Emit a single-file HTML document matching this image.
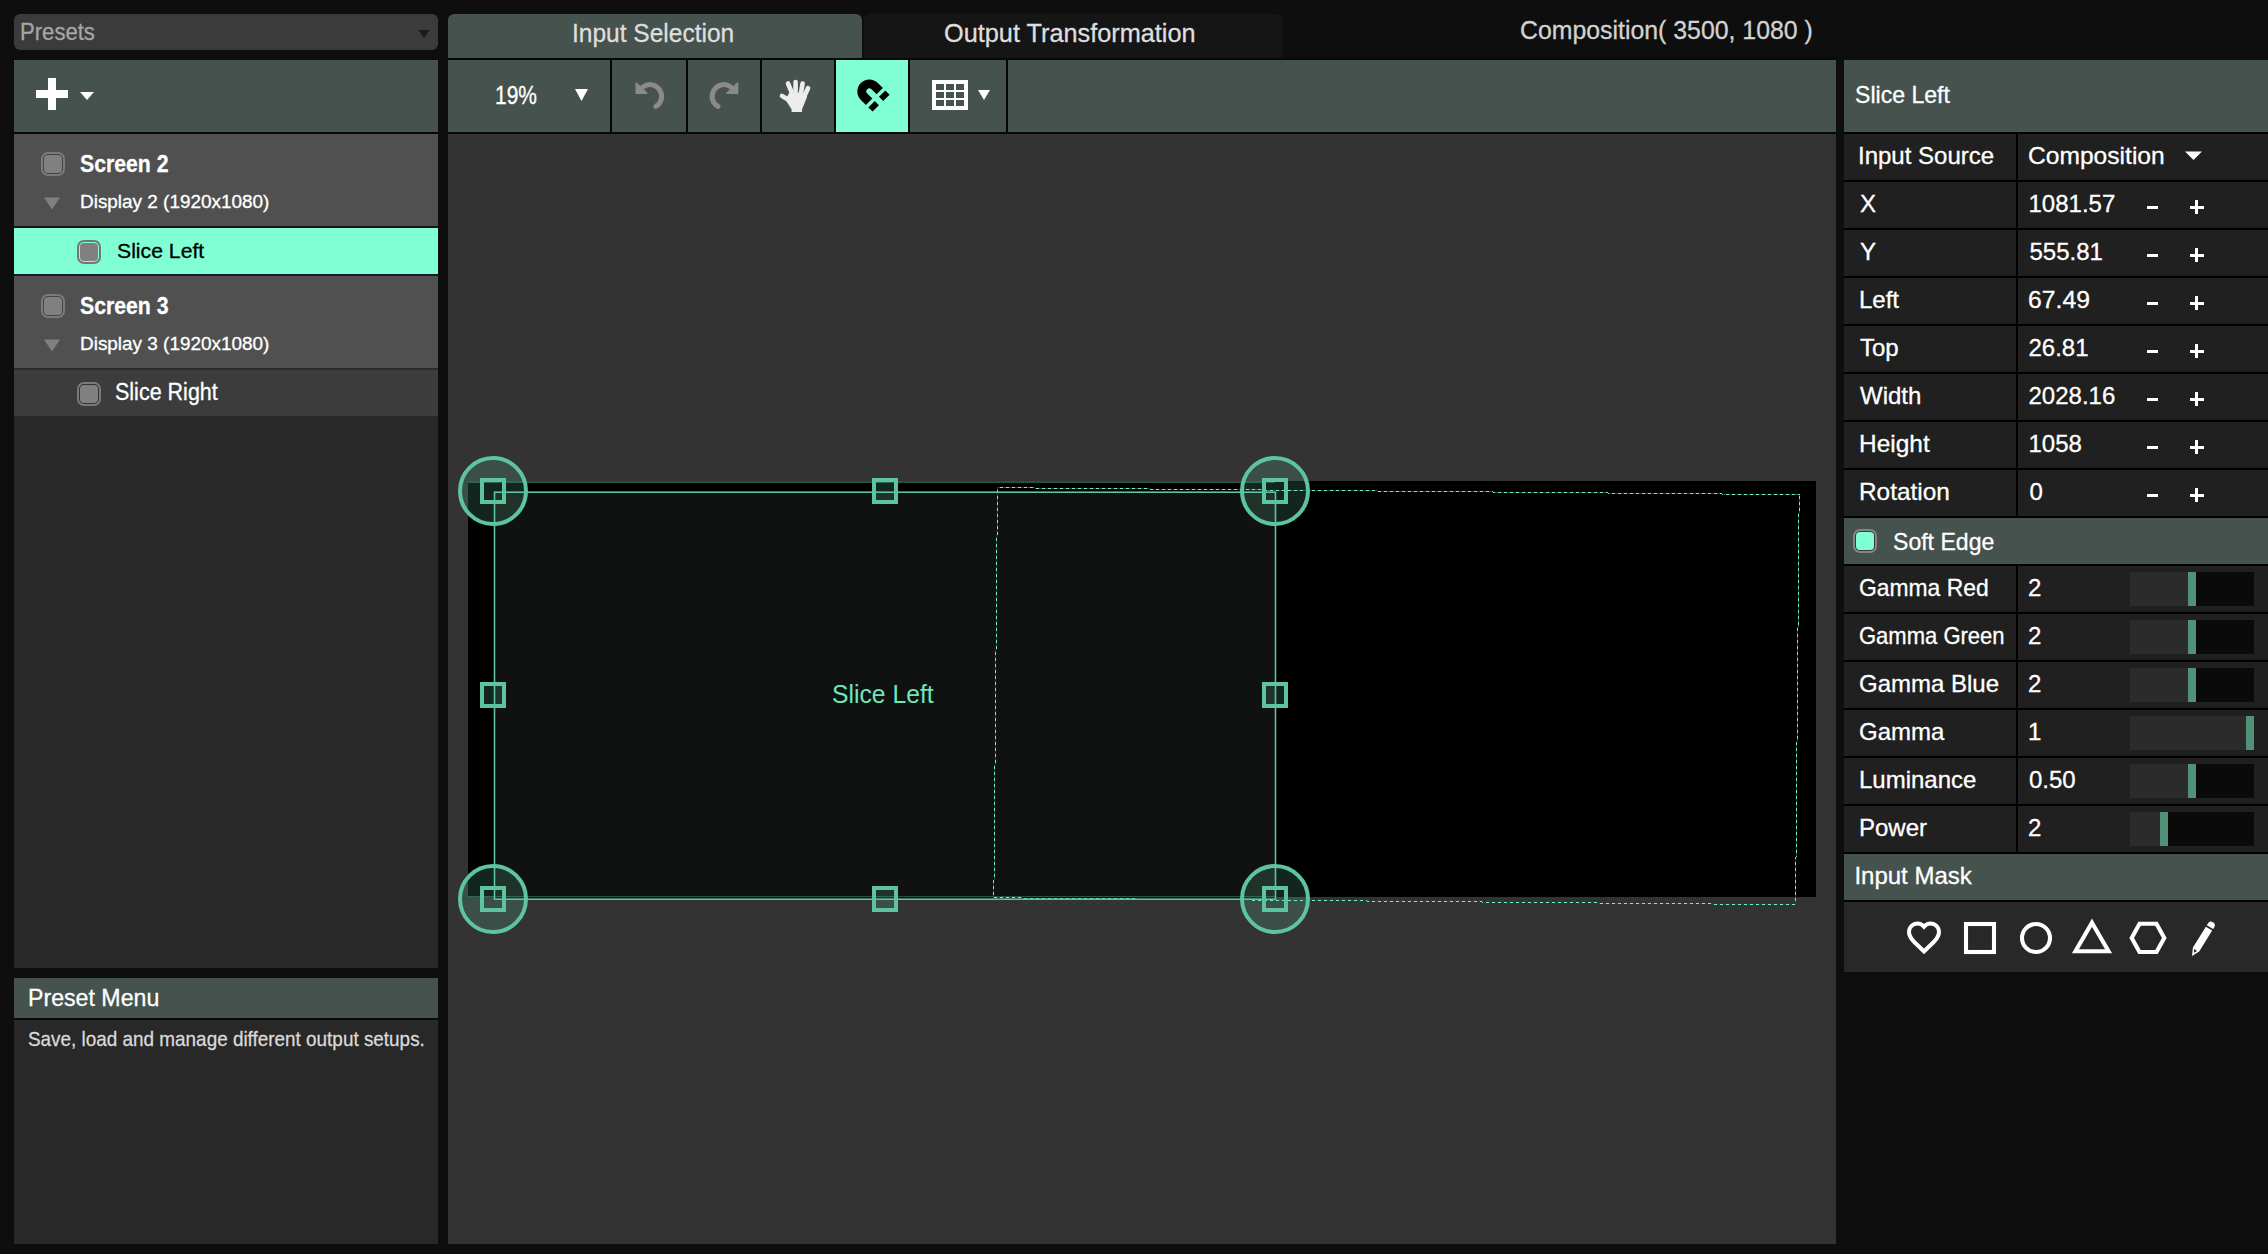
<!DOCTYPE html>
<html><head><meta charset="utf-8"><style>
html,body{margin:0;padding:0}
body{width:2268px;height:1254px;background:#0e0e0e;position:relative;overflow:hidden;font-family:"Liberation Sans",sans-serif}
.r{position:absolute}
.tx{position:absolute;white-space:pre;transform-origin:0 0;-webkit-text-stroke:0.3px currentColor}
svg.r{overflow:visible}
</style></head><body>
<div class="r" style="left:14px;top:14px;width:424px;height:36px;background:#3b3b3b;border-radius:6px;"></div>
<svg class="r" style="left:418px;top:30px" width="12" height="9"><polygon points="0.5,0 11.5,0 6,8.6" fill="#1b1b1b"/></svg>
<div class="r" style="left:14px;top:60px;width:424px;height:72px;background:#46524e;"></div>
<div class="r" style="left:36px;top:90px;width:32px;height:8px;background:#fff;"></div>
<div class="r" style="left:48px;top:78px;width:8px;height:32px;background:#fff;"></div>
<svg class="r" style="left:80px;top:92px" width="14" height="8"><polygon points="0,0 14,0 7,8" fill="#fff"/></svg>
<div class="r" style="left:14px;top:132px;width:424px;height:2px;background:#070707;"></div>
<div class="r" style="left:14px;top:134px;width:424px;height:92px;background:#505050;"></div>
<div class="r" style="left:14px;top:226px;width:424px;height:2px;background:#181414;"></div>
<div class="r" style="left:14px;top:228px;width:424px;height:46px;background:#80ffd4;"></div>
<div class="r" style="left:14px;top:274px;width:424px;height:2px;background:#16163a;"></div>
<div class="r" style="left:14px;top:276px;width:424px;height:92px;background:#505050;"></div>
<div class="r" style="left:14px;top:368px;width:424px;height:2px;background:#2a2a2a;"></div>
<div class="r" style="left:14px;top:370px;width:424px;height:46px;background:#3c3c3c;"></div>
<div class="r" style="left:14px;top:416px;width:424px;height:552px;background:#282828;"></div>
<div class="r" style="left:41px;top:152px;width:24px;height:24px;border-radius:7px;background:#7a7a7a"></div><div class="r" style="left:43px;top:154px;width:20px;height:20px;border-radius:5px;background:#464646"></div><div class="r" style="left:44px;top:155px;width:18px;height:18px;border-radius:4px;background:#808080"></div>
<div class="r" style="left:77px;top:240px;width:24px;height:24px;border-radius:7px;background:#7a7474"></div><div class="r" style="left:79px;top:242px;width:20px;height:20px;border-radius:5px;background:#80ffd4"></div><div class="r" style="left:80px;top:243px;width:18px;height:18px;border-radius:4px;background:#808080"></div>
<div class="r" style="left:41px;top:294px;width:24px;height:24px;border-radius:7px;background:#7a7a7a"></div><div class="r" style="left:43px;top:296px;width:20px;height:20px;border-radius:5px;background:#464646"></div><div class="r" style="left:44px;top:297px;width:18px;height:18px;border-radius:4px;background:#808080"></div>
<div class="r" style="left:77px;top:382px;width:24px;height:24px;border-radius:7px;background:#7a7a7a"></div><div class="r" style="left:79px;top:384px;width:20px;height:20px;border-radius:5px;background:#333333"></div><div class="r" style="left:80px;top:385px;width:18px;height:18px;border-radius:4px;background:#808080"></div>
<svg class="r" style="left:44px;top:197px" width="16" height="13"><polygon points="0,0.5 16,0.5 8,12.5" fill="#808080"/></svg>
<svg class="r" style="left:44px;top:339px" width="16" height="13"><polygon points="0,0.5 16,0.5 8,12.5" fill="#808080"/></svg>
<div class="r" style="left:14px;top:978px;width:424px;height:40px;background:#46524e;"></div>
<div class="r" style="left:14px;top:1018px;width:424px;height:2px;background:#0a0a0a;"></div>
<div class="r" style="left:14px;top:1020px;width:424px;height:224px;background:#282828;"></div>
<div class="r" style="left:448px;top:14px;width:414px;height:46px;background:#46524e;border-radius:6px 6px 0 0;"></div>
<div class="r" style="left:864px;top:14px;width:418px;height:46px;background:#151515;border-radius:6px 6px 0 0;"></div>
<div class="r" style="left:448px;top:58px;width:1388px;height:2px;background:#080808;"></div>
<div class="r" style="left:448px;top:60px;width:1388px;height:72px;background:#46524e;"></div>
<div class="r" style="left:610px;top:60px;width:2px;height:72px;background:#060606;"></div>
<div class="r" style="left:686px;top:60px;width:2px;height:72px;background:#060606;"></div>
<div class="r" style="left:760px;top:60px;width:2px;height:72px;background:#060606;"></div>
<div class="r" style="left:834px;top:60px;width:2px;height:72px;background:#060606;"></div>
<div class="r" style="left:908px;top:60px;width:2px;height:72px;background:#060606;"></div>
<div class="r" style="left:1006px;top:60px;width:2px;height:72px;background:#060606;"></div>
<div class="r" style="left:836px;top:60px;width:72px;height:72px;background:#80ffd4;"></div>
<div class="r" style="left:448px;top:132px;width:1388px;height:2px;background:#080808;"></div>
<div class="r" style="left:448px;top:134px;width:1388px;height:1110px;background:#333333;"></div>
<svg class="r" style="left:575px;top:89px" width="13" height="12"><polygon points="0,0 13,0 6.5,12" fill="#fff"/></svg>
<div class="r" style="left:1844px;top:60px;width:424px;height:72px;background:#46524e;"></div>
<div class="r" style="left:1844px;top:132px;width:424px;height:384px;background:#000;"></div>
<div class="r" style="left:1844px;top:134px;width:172px;height:46px;background:#202020;"></div>
<div class="r" style="left:2018px;top:134px;width:250px;height:46px;background:#202020;"></div>
<div class="r" style="left:1844px;top:182px;width:172px;height:46px;background:#202020;"></div>
<div class="r" style="left:2018px;top:182px;width:250px;height:46px;background:#202020;"></div>
<div class="r" style="left:1844px;top:230px;width:172px;height:46px;background:#202020;"></div>
<div class="r" style="left:2018px;top:230px;width:250px;height:46px;background:#202020;"></div>
<div class="r" style="left:1844px;top:278px;width:172px;height:46px;background:#202020;"></div>
<div class="r" style="left:2018px;top:278px;width:250px;height:46px;background:#202020;"></div>
<div class="r" style="left:1844px;top:326px;width:172px;height:46px;background:#202020;"></div>
<div class="r" style="left:2018px;top:326px;width:250px;height:46px;background:#202020;"></div>
<div class="r" style="left:1844px;top:374px;width:172px;height:46px;background:#202020;"></div>
<div class="r" style="left:2018px;top:374px;width:250px;height:46px;background:#202020;"></div>
<div class="r" style="left:1844px;top:422px;width:172px;height:46px;background:#202020;"></div>
<div class="r" style="left:2018px;top:422px;width:250px;height:46px;background:#202020;"></div>
<div class="r" style="left:1844px;top:470px;width:172px;height:46px;background:#202020;"></div>
<div class="r" style="left:2018px;top:470px;width:250px;height:46px;background:#202020;"></div>
<div class="r" style="left:2147px;top:206px;width:11px;height:3px;background:#fff;"></div>
<div class="r" style="left:2190px;top:206px;width:14px;height:3px;background:#fff;"></div>
<div class="r" style="left:2195.2px;top:200px;width:2.8px;height:14px;background:#fff;"></div>
<div class="r" style="left:2147px;top:254px;width:11px;height:3px;background:#fff;"></div>
<div class="r" style="left:2190px;top:254px;width:14px;height:3px;background:#fff;"></div>
<div class="r" style="left:2195.2px;top:248px;width:2.8px;height:14px;background:#fff;"></div>
<div class="r" style="left:2147px;top:302px;width:11px;height:3px;background:#fff;"></div>
<div class="r" style="left:2190px;top:302px;width:14px;height:3px;background:#fff;"></div>
<div class="r" style="left:2195.2px;top:296px;width:2.8px;height:14px;background:#fff;"></div>
<div class="r" style="left:2147px;top:350px;width:11px;height:3px;background:#fff;"></div>
<div class="r" style="left:2190px;top:350px;width:14px;height:3px;background:#fff;"></div>
<div class="r" style="left:2195.2px;top:344px;width:2.8px;height:14px;background:#fff;"></div>
<div class="r" style="left:2147px;top:398px;width:11px;height:3px;background:#fff;"></div>
<div class="r" style="left:2190px;top:398px;width:14px;height:3px;background:#fff;"></div>
<div class="r" style="left:2195.2px;top:392px;width:2.8px;height:14px;background:#fff;"></div>
<div class="r" style="left:2147px;top:446px;width:11px;height:3px;background:#fff;"></div>
<div class="r" style="left:2190px;top:446px;width:14px;height:3px;background:#fff;"></div>
<div class="r" style="left:2195.2px;top:440px;width:2.8px;height:14px;background:#fff;"></div>
<div class="r" style="left:2147px;top:494px;width:11px;height:3px;background:#fff;"></div>
<div class="r" style="left:2190px;top:494px;width:14px;height:3px;background:#fff;"></div>
<div class="r" style="left:2195.2px;top:488px;width:2.8px;height:14px;background:#fff;"></div>
<svg class="r" style="left:2185px;top:151px" width="17" height="10"><polygon points="0,0.5 17,0.5 8.5,9" fill="#fff"/></svg>
<div class="r" style="left:1844px;top:516px;width:424px;height:2px;background:#000;"></div>
<div class="r" style="left:1844px;top:518px;width:424px;height:46px;background:#46524e;"></div>
<div class="r" style="left:1853px;top:529px;width:24px;height:24px;border-radius:7px;background:#858585"></div><div class="r" style="left:1855px;top:531px;width:20px;height:20px;border-radius:5px;background:#3a3a3a"></div><div class="r" style="left:1856px;top:532px;width:18px;height:18px;border-radius:4px;background:#80ffd4"></div>
<div class="r" style="left:1844px;top:564px;width:424px;height:290px;background:#000;"></div>
<div class="r" style="left:1844px;top:566px;width:172px;height:46px;background:#202020;"></div>
<div class="r" style="left:2018px;top:566px;width:250px;height:46px;background:#202020;"></div>
<div class="r" style="left:2130px;top:572px;width:58px;height:34px;background:#2b2b2b;"></div>
<div class="r" style="left:2196px;top:572px;width:58px;height:34px;background:#0a0a0a;"></div>
<div class="r" style="left:2188px;top:572px;width:8px;height:34px;background:#519178;"></div>
<div class="r" style="left:1844px;top:614px;width:172px;height:46px;background:#202020;"></div>
<div class="r" style="left:2018px;top:614px;width:250px;height:46px;background:#202020;"></div>
<div class="r" style="left:2130px;top:620px;width:58px;height:34px;background:#2b2b2b;"></div>
<div class="r" style="left:2196px;top:620px;width:58px;height:34px;background:#0a0a0a;"></div>
<div class="r" style="left:2188px;top:620px;width:8px;height:34px;background:#519178;"></div>
<div class="r" style="left:1844px;top:662px;width:172px;height:46px;background:#202020;"></div>
<div class="r" style="left:2018px;top:662px;width:250px;height:46px;background:#202020;"></div>
<div class="r" style="left:2130px;top:668px;width:58px;height:34px;background:#2b2b2b;"></div>
<div class="r" style="left:2196px;top:668px;width:58px;height:34px;background:#0a0a0a;"></div>
<div class="r" style="left:2188px;top:668px;width:8px;height:34px;background:#519178;"></div>
<div class="r" style="left:1844px;top:710px;width:172px;height:46px;background:#202020;"></div>
<div class="r" style="left:2018px;top:710px;width:250px;height:46px;background:#202020;"></div>
<div class="r" style="left:2130px;top:716px;width:116px;height:34px;background:#2b2b2b;"></div>
<div class="r" style="left:2254px;top:716px;width:0px;height:34px;background:#0a0a0a;"></div>
<div class="r" style="left:2246px;top:716px;width:8px;height:34px;background:#519178;"></div>
<div class="r" style="left:1844px;top:758px;width:172px;height:46px;background:#202020;"></div>
<div class="r" style="left:2018px;top:758px;width:250px;height:46px;background:#202020;"></div>
<div class="r" style="left:2130px;top:764px;width:58px;height:34px;background:#2b2b2b;"></div>
<div class="r" style="left:2196px;top:764px;width:58px;height:34px;background:#0a0a0a;"></div>
<div class="r" style="left:2188px;top:764px;width:8px;height:34px;background:#519178;"></div>
<div class="r" style="left:1844px;top:806px;width:172px;height:46px;background:#202020;"></div>
<div class="r" style="left:2018px;top:806px;width:250px;height:46px;background:#202020;"></div>
<div class="r" style="left:2130px;top:812px;width:30px;height:34px;background:#2b2b2b;"></div>
<div class="r" style="left:2168px;top:812px;width:86px;height:34px;background:#0a0a0a;"></div>
<div class="r" style="left:2160px;top:812px;width:8px;height:34px;background:#519178;"></div>
<div class="r" style="left:1844px;top:854px;width:424px;height:46px;background:#46524e;"></div>
<div class="r" style="left:1844px;top:900px;width:424px;height:2px;background:#000;"></div>
<div class="r" style="left:1844px;top:902px;width:424px;height:70px;background:#282828;"></div>
<svg class="r" style="left:0;top:0" width="2268" height="1254">
<rect x="468" y="481" width="1348" height="416" fill="#000"/>
<rect x="494" y="492" width="781" height="407" fill="#101211"/>
<rect x="468" y="481" width="807" height="2" fill="#24503f"/>
<rect x="468" y="896" width="807" height="1" fill="#24503f"/>
<g stroke="#3c3c3c" stroke-width="1" fill="none"><line x1="997" y1="487.5" x2="1035" y2="487.5" stroke-dashoffset="3.0"/><line x1="1035" y1="488.5" x2="1150" y2="488.5" stroke-dashoffset="5.0"/><line x1="1150" y1="489.5" x2="1264" y2="489.5" stroke-dashoffset="0.0"/><line x1="1264" y1="490.5" x2="1378" y2="490.5" stroke-dashoffset="0.0"/><line x1="1378" y1="491.5" x2="1493" y2="491.5" stroke-dashoffset="0.0"/><line x1="1493" y1="492.5" x2="1608" y2="492.5" stroke-dashoffset="1.0"/><line x1="1608" y1="493.5" x2="1722" y2="493.5" stroke-dashoffset="2.0"/><line x1="1722" y1="494.5" x2="1800" y2="494.5" stroke-dashoffset="2.0"/><line x1="993" y1="897.5" x2="1022" y2="897.5" stroke-dashoffset="5.0"/><line x1="1022" y1="898.5" x2="1137" y2="898.5" stroke-dashoffset="4.0"/><line x1="1137" y1="899.5" x2="1252" y2="899.5" stroke-dashoffset="5.0"/><line x1="1252" y1="900.5" x2="1367" y2="900.5" stroke-dashoffset="0.0"/><line x1="1367" y1="901.5" x2="1482" y2="901.5" stroke-dashoffset="1.0"/><line x1="1482" y1="902.5" x2="1597" y2="902.5" stroke-dashoffset="2.0"/><line x1="1597" y1="903.5" x2="1712" y2="903.5" stroke-dashoffset="3.0"/><line x1="1712" y1="904.5" x2="1796" y2="904.5" stroke-dashoffset="4.0"/><line x1="997.5" y1="487" x2="997.5" y2="535" stroke-dashoffset="3.0"/><line x1="996.5" y1="535" x2="996.5" y2="650" stroke-dashoffset="3.0"/><line x1="995.5" y1="650" x2="995.5" y2="765" stroke-dashoffset="4.0"/><line x1="994.5" y1="765" x2="994.5" y2="880" stroke-dashoffset="5.0"/><line x1="993.5" y1="880" x2="993.5" y2="898" stroke-dashoffset="0.0"/><line x1="1799.5" y1="494" x2="1799.5" y2="513" stroke-dashoffset="4.0"/><line x1="1798.5" y1="513" x2="1798.5" y2="627" stroke-dashoffset="5.0"/><line x1="1797.5" y1="627" x2="1797.5" y2="742" stroke-dashoffset="5.0"/><line x1="1796.5" y1="742" x2="1796.5" y2="857" stroke-dashoffset="0.0"/><line x1="1795.5" y1="857" x2="1795.5" y2="904" stroke-dashoffset="1.0"/></g>
<g stroke="#72f2c6" stroke-width="1" stroke-dasharray="3 3" fill="none"><line x1="997" y1="487.5" x2="1035" y2="487.5" stroke-dashoffset="3.0"/><line x1="1035" y1="488.5" x2="1150" y2="488.5" stroke-dashoffset="5.0"/><line x1="1150" y1="489.5" x2="1264" y2="489.5" stroke-dashoffset="0.0"/><line x1="1264" y1="490.5" x2="1378" y2="490.5" stroke-dashoffset="0.0"/><line x1="1378" y1="491.5" x2="1493" y2="491.5" stroke-dashoffset="0.0"/><line x1="1493" y1="492.5" x2="1608" y2="492.5" stroke-dashoffset="1.0"/><line x1="1608" y1="493.5" x2="1722" y2="493.5" stroke-dashoffset="2.0"/><line x1="1722" y1="494.5" x2="1800" y2="494.5" stroke-dashoffset="2.0"/><line x1="993" y1="897.5" x2="1022" y2="897.5" stroke-dashoffset="5.0"/><line x1="1022" y1="898.5" x2="1137" y2="898.5" stroke-dashoffset="4.0"/><line x1="1137" y1="899.5" x2="1252" y2="899.5" stroke-dashoffset="5.0"/><line x1="1252" y1="900.5" x2="1367" y2="900.5" stroke-dashoffset="0.0"/><line x1="1367" y1="901.5" x2="1482" y2="901.5" stroke-dashoffset="1.0"/><line x1="1482" y1="902.5" x2="1597" y2="902.5" stroke-dashoffset="2.0"/><line x1="1597" y1="903.5" x2="1712" y2="903.5" stroke-dashoffset="3.0"/><line x1="1712" y1="904.5" x2="1796" y2="904.5" stroke-dashoffset="4.0"/><line x1="997.5" y1="487" x2="997.5" y2="535" stroke-dashoffset="3.0"/><line x1="996.5" y1="535" x2="996.5" y2="650" stroke-dashoffset="3.0"/><line x1="995.5" y1="650" x2="995.5" y2="765" stroke-dashoffset="4.0"/><line x1="994.5" y1="765" x2="994.5" y2="880" stroke-dashoffset="5.0"/><line x1="993.5" y1="880" x2="993.5" y2="898" stroke-dashoffset="0.0"/><line x1="1799.5" y1="494" x2="1799.5" y2="513" stroke-dashoffset="4.0"/><line x1="1798.5" y1="513" x2="1798.5" y2="627" stroke-dashoffset="5.0"/><line x1="1797.5" y1="627" x2="1797.5" y2="742" stroke-dashoffset="5.0"/><line x1="1796.5" y1="742" x2="1796.5" y2="857" stroke-dashoffset="0.0"/><line x1="1795.5" y1="857" x2="1795.5" y2="904" stroke-dashoffset="1.0"/></g>
<rect x="494.5" y="492.2" width="781" height="407" fill="none" stroke="#5ec4a0" stroke-width="1.6"/>
<g>
<circle cx="493" cy="491" r="33" fill="rgba(94,196,160,0.19)" stroke="#5ec4a0" stroke-width="4"/>
<circle cx="1275" cy="491" r="33" fill="rgba(94,196,160,0.19)" stroke="#5ec4a0" stroke-width="4"/>
<circle cx="493" cy="899" r="33" fill="rgba(94,196,160,0.19)" stroke="#5ec4a0" stroke-width="4"/>
<circle cx="1275" cy="899" r="33" fill="rgba(94,196,160,0.19)" stroke="#5ec4a0" stroke-width="4"/>
<rect x="482" y="480" width="22" height="22" fill="none" stroke="#5ec4a0" stroke-width="4"/>
<rect x="1264" y="480" width="22" height="22" fill="none" stroke="#5ec4a0" stroke-width="4"/>
<rect x="482" y="888" width="22" height="22" fill="none" stroke="#5ec4a0" stroke-width="4"/>
<rect x="1264" y="888" width="22" height="22" fill="none" stroke="#5ec4a0" stroke-width="4"/>
<rect x="874" y="480" width="22" height="22" fill="rgba(94,196,160,0.19)" stroke="#5ec4a0" stroke-width="4"/>
<rect x="874" y="888" width="22" height="22" fill="rgba(94,196,160,0.19)" stroke="#5ec4a0" stroke-width="4"/>
<rect x="482" y="684" width="22" height="22" fill="rgba(94,196,160,0.19)" stroke="#5ec4a0" stroke-width="4"/>
<rect x="1264" y="684" width="22" height="22" fill="rgba(94,196,160,0.19)" stroke="#5ec4a0" stroke-width="4"/>
</g>
<path d="M1924,926.7 C1921.5,923.8 1917.5,922.9 1914.2,924.2 C1910.3,925.8 1908.6,929.6 1909.1,933.3 C1909.6,936.8 1911.8,939.6 1914.8,942.6 L1924,951.4 L1933.2,942.6 C1936.2,939.6 1938.4,936.8 1938.9,933.3 C1939.4,929.6 1937.7,925.8 1933.8,924.2 C1930.5,922.9 1926.5,923.8 1924,926.7 Z" fill="none" stroke="#fff" stroke-width="4.1" stroke-linejoin="miter" stroke-miterlimit="10"/>
<rect x="1966" y="924" width="28" height="28" fill="none" stroke="#fff" stroke-width="4.1"/>
<circle cx="2036" cy="938" r="14" fill="none" stroke="#fff" stroke-width="4.1"/>
<polygon points="2092,922.65 2108.54,951.3 2075.46,951.3" fill="none" stroke="#fff" stroke-width="4.1" stroke-linejoin="miter" stroke-miterlimit="10"/>
<polygon points="2139.5,923.8 2156.5,923.8 2164.3,937.9 2156.5,952 2139.5,952 2131.7,937.9" fill="none" stroke="#fff" stroke-width="4.1" stroke-linejoin="miter"/>
<g transform="translate(2192,956) rotate(31.9)"><path d="M0,0 L-3.7,-7.7 L-3.7,-32.2 L3.7,-32.2 L3.7,-7.7 Z M-3.7,-34 L3.7,-34 L3.7,-36 A3.7,3.7 0 0 0 -3.7,-36 Z" fill="#fff"/><polygon points="-1.86,-6.97 1.39,-6.87 0.05,-3.9" fill="#111"/></g>
<g fill="none" stroke="#8a8a8a" stroke-width="5" stroke-linecap="round"><path d="M643.3,86.7 A11.7,11.7 0 1 1 655.85,106.43"/><path d="M643.3,86.7 A11.7,11.7 0 1 1 655.85,106.43" transform="translate(1373.8,0) scale(-1,1)"/></g>
<polygon points="636.4,83.4 636.4,93.2 646.6,93.2" fill="#8a8a8a" stroke="#8a8a8a" stroke-width="1.8" stroke-linejoin="round"/>
<polygon points="636.4,83.4 636.4,93.2 646.6,93.2" fill="#8a8a8a" stroke="#8a8a8a" stroke-width="1.8" stroke-linejoin="round" transform="translate(1373.8,0) scale(-1,1)"/>
<rect x="932" y="80" width="36" height="30" fill="#fff"/>
<rect x="936" y="84" width="8" height="6" fill="#46524e"/>
<rect x="936" y="92" width="8" height="6" fill="#46524e"/>
<rect x="936" y="100" width="8" height="6" fill="#46524e"/>
<rect x="946" y="84" width="8" height="6" fill="#46524e"/>
<rect x="946" y="92" width="8" height="6" fill="#46524e"/>
<rect x="946" y="100" width="8" height="6" fill="#46524e"/>
<rect x="956" y="84" width="8" height="6" fill="#46524e"/>
<rect x="956" y="92" width="8" height="6" fill="#46524e"/>
<rect x="956" y="100" width="8" height="6" fill="#46524e"/>
<polygon points="978,90 990,90 984,100" fill="#fff"/>
<g stroke="#ececec" stroke-width="4.6" stroke-linecap="round"><line x1="792" y1="93" x2="788" y2="83.5"/><line x1="795.6" y1="92" x2="795.6" y2="82"/><line x1="801" y1="93" x2="802.6" y2="83.5"/><line x1="804" y1="97" x2="808" y2="88.2"/><line x1="789" y1="100" x2="782" y2="96"/></g>
<polygon points="785.5,100 789.5,92 806.5,93 806.8,97.5 802,109.5 802,112 791.6,112 791.6,109.2" fill="#ececec"/>
<g transform="translate(869.35,91.4) rotate(45)"><path d="M7.2,-12 L0,-12 A12,12 0 0 0 0,12 L7.2,12 L7.2,3 L0,3 A3,3 0 0 1 0,-3 L7.2,-3 Z" fill="#000"/><rect x="10.6" y="-12" width="6" height="9" fill="#000"/><rect x="10.6" y="3" width="6" height="9" fill="#000"/></g>
</svg>
<div class="tx" style="left:20.08px;top:20.00px;font-size:24px;line-height:24px;font-weight:400;color:#a6a6a6;transform:scaleX(0.9208);">Presets</div>
<div class="tx" style="left:80.20px;top:153.20px;font-size:23px;line-height:23px;font-weight:700;color:#ffffff;transform:scaleX(0.9232);">Screen 2</div>
<div class="tx" style="left:79.65px;top:193.00px;font-size:18px;line-height:18px;font-weight:400;color:#ffffff;transform:scaleX(1.0516);">Display 2 (1920x1080)</div>
<div class="tx" style="left:116.60px;top:240.10px;font-size:21px;line-height:21px;font-weight:400;color:#000000;transform:scaleX(1.0099);">Slice Left</div>
<div class="tx" style="left:80.20px;top:295.20px;font-size:23px;line-height:23px;font-weight:700;color:#ffffff;transform:scaleX(0.9232);">Screen 3</div>
<div class="tx" style="left:79.65px;top:335.10px;font-size:18px;line-height:18px;font-weight:400;color:#ffffff;transform:scaleX(1.0516);">Display 3 (1920x1080)</div>
<div class="tx" style="left:115.07px;top:381.10px;font-size:23px;line-height:23px;font-weight:400;color:#ffffff;transform:scaleX(0.9348);">Slice Right</div>
<div class="tx" style="left:28.04px;top:986.20px;font-size:24px;line-height:24px;font-weight:400;color:#ffffff;transform:scaleX(0.9647);">Preset Menu</div>
<div class="tx" style="left:28.00px;top:1028.20px;font-size:21px;line-height:21px;font-weight:400;color:#d9d9d9;transform:scaleX(0.9000);">Save, load and manage different output setups.</div>
<div class="tx" style="left:572.04px;top:21.20px;font-size:25px;line-height:25px;font-weight:400;color:#dedede;transform:scaleX(0.9804);">Input Selection</div>
<div class="tx" style="left:944.49px;top:21.30px;font-size:25px;line-height:25px;font-weight:400;color:#dedede;transform:scaleX(1.0114);">Output Transformation</div>
<div class="tx" style="left:1520.01px;top:17.60px;font-size:25px;line-height:25px;font-weight:400;color:#d2d2d2;transform:scaleX(0.9939);">Composition( 3500, 1080 )</div>
<div class="tx" style="left:494.66px;top:83.20px;font-size:25px;line-height:25px;font-weight:400;color:#ffffff;transform:scaleX(0.8380);">19%</div>
<div class="tx" style="left:832.25px;top:681.20px;font-size:26px;line-height:26px;font-weight:400;color:#6fe6ba;transform:scaleX(0.9501);-webkit-text-stroke:0;">Slice Left</div>
<div class="tx" style="left:1855.34px;top:82.50px;font-size:24px;line-height:24px;font-weight:400;color:#ffffff;transform:scaleX(0.9617);">Slice Left</div>
<div class="tx" style="left:1858.00px;top:144.00px;font-size:24px;line-height:24px;font-weight:400;color:#ffffff;">Input Source</div>
<div class="tx" style="left:2028.48px;top:144.00px;font-size:24px;line-height:24px;font-weight:400;color:#ffffff;transform:scaleX(1.0248);">Composition</div>
<div class="tx" style="left:1860.00px;top:192.00px;font-size:24px;line-height:24px;font-weight:400;color:#ffffff;">X</div>
<div class="tx" style="left:2028.50px;top:192.00px;font-size:24px;line-height:24px;font-weight:400;color:#ffffff;">1081.57</div>
<div class="tx" style="left:1860.00px;top:240.00px;font-size:24px;line-height:24px;font-weight:400;color:#ffffff;">Y</div>
<div class="tx" style="left:2029.50px;top:240.00px;font-size:24px;line-height:24px;font-weight:400;color:#ffffff;">555.81</div>
<div class="tx" style="left:1859.00px;top:288.00px;font-size:24px;line-height:24px;font-weight:400;color:#ffffff;">Left</div>
<div class="tx" style="left:2028.47px;top:288.00px;font-size:24px;line-height:24px;font-weight:400;color:#ffffff;transform:scaleX(1.0305);">67.49</div>
<div class="tx" style="left:1860.00px;top:336.00px;font-size:24px;line-height:24px;font-weight:400;color:#ffffff;">Top</div>
<div class="tx" style="left:2028.50px;top:336.00px;font-size:24px;line-height:24px;font-weight:400;color:#ffffff;">26.81</div>
<div class="tx" style="left:1860.00px;top:384.00px;font-size:24px;line-height:24px;font-weight:400;color:#ffffff;">Width</div>
<div class="tx" style="left:2028.50px;top:384.00px;font-size:24px;line-height:24px;font-weight:400;color:#ffffff;">2028.16</div>
<div class="tx" style="left:1858.98px;top:432.00px;font-size:24px;line-height:24px;font-weight:400;color:#ffffff;transform:scaleX(1.0188);">Height</div>
<div class="tx" style="left:2028.50px;top:432.00px;font-size:24px;line-height:24px;font-weight:400;color:#ffffff;">1058</div>
<div class="tx" style="left:1858.98px;top:480.00px;font-size:24px;line-height:24px;font-weight:400;color:#ffffff;transform:scaleX(1.0156);">Rotation</div>
<div class="tx" style="left:2029.50px;top:480.00px;font-size:24px;line-height:24px;font-weight:400;color:#ffffff;">0</div>
<div class="tx" style="left:1893.04px;top:530.40px;font-size:24px;line-height:24px;font-weight:400;color:#ffffff;transform:scaleX(0.9610);">Soft Edge</div>
<div class="tx" style="left:1859.05px;top:576.00px;font-size:24px;line-height:24px;font-weight:400;color:#ffffff;transform:scaleX(0.9529);">Gamma Red</div>
<div class="tx" style="left:2028.00px;top:576.00px;font-size:24px;line-height:24px;font-weight:400;color:#ffffff;">2</div>
<div class="tx" style="left:1859.08px;top:624.00px;font-size:24px;line-height:24px;font-weight:400;color:#ffffff;transform:scaleX(0.9170);">Gamma Green</div>
<div class="tx" style="left:2028.00px;top:624.00px;font-size:24px;line-height:24px;font-weight:400;color:#ffffff;">2</div>
<div class="tx" style="left:1859.00px;top:672.00px;font-size:24px;line-height:24px;font-weight:400;color:#ffffff;">Gamma Blue</div>
<div class="tx" style="left:2028.00px;top:672.00px;font-size:24px;line-height:24px;font-weight:400;color:#ffffff;">2</div>
<div class="tx" style="left:1859.00px;top:720.00px;font-size:24px;line-height:24px;font-weight:400;color:#ffffff;">Gamma</div>
<div class="tx" style="left:2028.00px;top:720.00px;font-size:24px;line-height:24px;font-weight:400;color:#ffffff;">1</div>
<div class="tx" style="left:1859.00px;top:768.00px;font-size:24px;line-height:24px;font-weight:400;color:#ffffff;">Luminance</div>
<div class="tx" style="left:2029.00px;top:768.00px;font-size:24px;line-height:24px;font-weight:400;color:#ffffff;">0.50</div>
<div class="tx" style="left:1859.00px;top:816.00px;font-size:24px;line-height:24px;font-weight:400;color:#ffffff;">Power</div>
<div class="tx" style="left:2028.00px;top:816.00px;font-size:24px;line-height:24px;font-weight:400;color:#ffffff;">2</div>
<div class="tx" style="left:1854.40px;top:863.80px;font-size:24px;line-height:24px;font-weight:400;color:#ffffff;">Input Mask</div>
</body></html>
